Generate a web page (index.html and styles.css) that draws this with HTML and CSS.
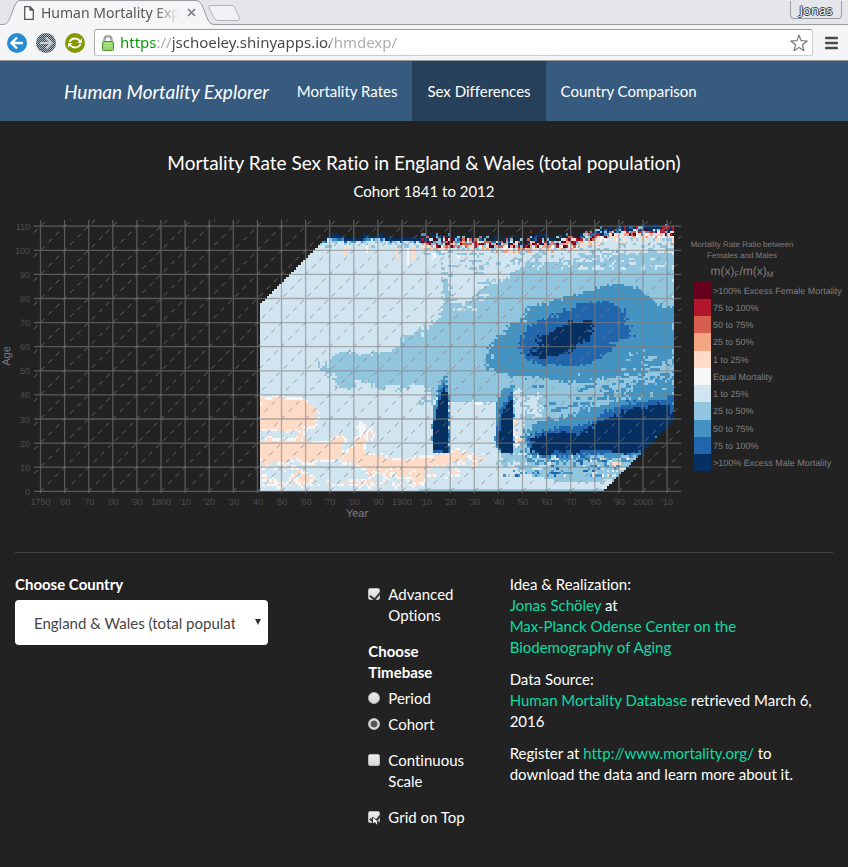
FILE: index.html
```html
<!DOCTYPE html>
<html lang="en">
<head>
<meta charset="utf-8">
<title>Human Mortality Explorer</title>
<link rel="stylesheet" href="styles.css">
</head>
<body>
<header class="browser">
  <div class="tabstrip">
    <svg class="tab-shape" width="250" height="25" viewBox="0 0 250 25" aria-hidden="true">
      <path d="M0 24.500H2C6 24.500 8 23 9.500 19L15 5Q16.500 .5 20 .5H196Q200 .5 202 5L208 20Q210 24.500 214 24.500H250V26H0Z" fill="#f4f5f7" stroke="#999b9f"/>
      <path d="M211 5.500H231Q234 5.500 235 8L239 17Q240.500 20.500 237 20.500H218Q215 20.500 213.500 17L209 8Q208 5.500 211 5.500Z" fill="#f0f1f3" stroke="#b3b4b8"/>
    </svg>
    <div class="tab">
      <svg width="10" height="14" viewBox="0 0 10 14" fill="#fff" stroke="#555" stroke-width="1.300" aria-hidden="true"><path d="M.7.7H6L9.300 4V13.300H.7ZM6 .7V4H9.300"/></svg>
      <span class="tab-title">Human Mortality Explorer</span>
      <button class="icon-button" aria-label="Close tab"><svg width="9" height="9" viewBox="0 0 9 9" stroke="#7c7e82" stroke-width="1.700"><path d="M1 1L8 8M8 1L1 8"/></svg></button>
    </div>
    <button class="profile">Jonas</button>
  </div>
  <div class="toolbar">
    <button class="icon-button" aria-label="Back"><svg width="20" height="20" viewBox="0 0 20 20"><circle cx="10" cy="10" r="10" fill="#268bd2"/><path d="M16 10H5M10 4.500L4.500 10L10 15.500" fill="none" stroke="#fff" stroke-width="2.400"/></svg></button>
    <button class="icon-button" aria-label="Forward"><svg width="20" height="20" viewBox="0 0 20 20"><defs><pattern id="dither" width="2" height="2" patternUnits="userSpaceOnUse"><path d="M0 0H1V1H0ZM1 1H2V2H1Z" fill="#234b66"/></pattern></defs><circle cx="10" cy="10" r="10" fill="#aebac3"/><circle cx="10" cy="10" r="10" fill="url(#dither)"/><path d="M4 10H15M10 4.500L15.500 10L10 15.500" fill="none" stroke="#e3e8ec" stroke-opacity=".75" stroke-width="2.200"/></svg></button>
    <button class="icon-button" aria-label="Reload"><svg width="20" height="20" viewBox="0 0 20 20"><circle cx="10" cy="10" r="10" fill="#859900"/><path d="M4.500 9Q6 5.500 10 5.500Q13 5.500 15 8M15.500 11Q14 14.500 10 14.500Q7 14.500 5 12" fill="none" stroke="#fff" stroke-width="1.900"/><path d="M17 5.500V10H12.500ZM3 14.500V10H7.500Z" fill="#fff"/></svg></button>
    <div class="omnibox">
      <svg width="12" height="16" viewBox="0 0 12 16" aria-hidden="true"><path d="M2.500 7V4.500Q2.500 1.200 6 1.200T9.500 4.500V7" fill="none" stroke="#777" stroke-width="2"/><path d="M2.500 7V4.500Q2.500 1.200 6 1.200T9.500 4.500V7" fill="none" stroke="#ddd" stroke-width=".7"/><rect x=".5" y="6.500" width="11" height="9" rx="1" fill="#93d36a" stroke="#4f9431"/><path d="M2 8.500H10M2 11H10" stroke="#b9e79b"/></svg>
      <input class="url" type="text" aria-label="Address" value="https://jschoeley.shinyapps.io/hmdexp/">
      <button class="icon-button" aria-label="Bookmark"><svg width="18" height="18" viewBox="0 0 18 18"><path d="M9 1L11 6.600L17.200 7L12.500 10.800L14 16.700L9 13.500L4 16.700L5.500 10.800L.8 7L7 6.600Z" fill="#fff" stroke="#777" stroke-width="1.200" stroke-linejoin="round"/></svg></button>
    </div>
    <button class="icon-button menu" aria-label="Menu"><svg width="13" height="14" viewBox="0 0 13 14"><path d="M1.300 2H11.700M1.300 7H11.700M1.300 12H11.700" stroke="#4a4a4a" stroke-width="2.700" stroke-linecap="round"/></svg></button>
  </div>
</header>

<nav class="navbar">
  <a class="brand" href="#">Human Mortality Explorer</a>
  <a class="nav-link" href="#rates">Mortality Rates</a>
  <a class="nav-link active" href="#sex">Sex Differences</a>
  <a class="nav-link" href="#countries">Country Comparison</a>
</nav>

<main>
  <h1>Mortality Rate Sex Ratio in England &amp; Wales (total population)</h1>
  <p class="subtitle">Cohort 1841 to 2012</p>
  <svg class="chart" id="chart" viewBox="0 205 848 320" role="img" aria-label="Mortality rate sex ratio by year and age"></svg>
  <hr>
  <div class="controls">
    <div class="country">
      <label class="heading" for="country">Choose Country</label>
      <div class="select-wrap">
        <select id="country"><option>England &amp; Wales (total population)</option></select>
        <svg class="caret" width="6" height="6" viewBox="0 0 6 6" aria-hidden="true"><path d="M0 0H6L3 6Z" fill="#333"/></svg>
      </div>
    </div>
    <div class="options">
      <label class="choice"><input type="checkbox" checked><span>Advanced Options</span></label>
      <fieldset>
        <legend class="heading">Choose Timebase</legend>
        <label class="choice"><input type="radio" name="timebase"><span>Period</span></label>
        <label class="choice"><input type="radio" name="timebase" checked><span>Cohort</span></label>
      </fieldset>
      <label class="choice"><input type="checkbox"><span>Continuous Scale</span></label>
      <label class="choice"><input type="checkbox" checked><span>Grid on Top</span>
        <svg class="pointer" width="7" height="8" viewBox="0 0 7 8" aria-hidden="true"><path d="M.5 0V7L3 5.500L4.500 8L6 7.500L5 5H7Z" fill="#fff" stroke="#111" stroke-width=".8"/></svg>
      </label>
    </div>
    <div class="credits">
      <p>Idea &amp; Realization:<br><a href="#author">Jonas Schöley</a> at<br><a href="#center">Max-Planck Odense Center on the Biodemography of Aging</a></p>
      <p>Data Source:<br><a href="#hmd">Human Mortality Database</a> retrieved March 6, 2016</p>
      <p>Register at <a href="#register">http://www.mortality.org/</a> to download the data and learn more about it.</p>
    </div>
  </div>
</main>
<script src="chart.js"></script>
</body>
</html>
```
FILE: styles.css
```css
* { box-sizing: border-box; }
body {
  margin: 0;
  background: #222;
  color: #fff;
  font: 15px/21px Lato, "Liberation Sans", sans-serif;
  font-variant-ligatures: none;
}
a { color: #08dda4; text-decoration: none; }
button, input, select { font: inherit; margin: 0; }
.icon-button { display: flex; padding: 0; border: 0; background: none; }

.browser { color: #555; font-family: "Noto Sans", sans-serif; background: #f4f5f7; border-bottom: 1px solid #999; }
.tabstrip { position: relative; display: flex; justify-content: space-between; height: 25px; background: #e5e6ea; border-bottom: 1px solid #999b9f; }
.tab-shape { position: absolute; left: 0; top: 0; }
.tab { position: relative; display: flex; align-items: center; gap: 7px; padding-left: 24px; padding-top: 1px; }
.tab-title {
  width: 138px;
  overflow: hidden;
  white-space: nowrap;
  font-size: 14px;
  -webkit-mask-image: linear-gradient(90deg, #000 82%, transparent);
  mask-image: linear-gradient(90deg, #000 82%, transparent);
}
.tab .icon-button { margin-left: 1px; }
.profile {
  align-self: flex-start;
  width: 52px;
  height: 18px;
  margin: 1px 6px 0;
  padding: 0;
  border: 1px solid #999b9f;
  border-top: 0;
  border-radius: 0 0 4px 4px;
  background: #e5e6ea;
  color: #eee;
  font-size: 13px;
  line-height: 18px;
  text-shadow: 1px 0 #444, -1px 0 #444, 0 1px #444, 0 -1px #444;
}
.toolbar { display: flex; align-items: center; gap: 9px; height: 35px; padding: 0 10px 0 7px; }
.omnibox { flex: 1; display: flex; align-items: center; gap: 6px; height: 27px; padding: 0 4px 0 7px; border: 1px solid #ccc; border-top-color: #999; border-left-color: #aaa; border-radius: 3px; background: #fff; }
.url {
  flex: 1;
  min-width: 0;
  padding: 0;
  border: 0;
  color: transparent;
  font-size: 15px;
  background: linear-gradient(90deg, #090 37px, #aaa 37px 52px, #444 52px 210px, #aaa 210px);
  -webkit-background-clip: text;
  background-clip: text;
}
.menu { margin-left: 3px; }

.navbar { display: flex; height: 60px; padding-left: 49px; background: #375a7f; }
.navbar a { padding: 20px 15px; color: #fff; }
.navbar .brand { padding-right: 13px; font-size: 19px; font-style: italic; }
.navbar .active { background: #28415b; }

main { padding: 31px 15px 0; }
h1 { margin: 0 0 7px; font-size: 19px; line-height: 22px; font-weight: 400; text-align: center; }
.subtitle { margin: 0 0 3px; text-align: center; }
.chart { display: block; width: calc(100% + 30px); margin: 0 -15px; font-family: "Liberation Sans", sans-serif; text-rendering: geometricPrecision; }
.tick { fill: #4d4d4d; font-size: 9px; }
.axis { fill: #7f7f7f; font-size: 11px; }
.key { fill: #7f7f7f; font-size: 9px; }
.key-title { fill: #7f7f7f; font-size: 8px; }
.formula { fill: #7f7f7f; font-size: 12px; }
.formula .sub { font-size: 8px; }
.grid { stroke: #7f7f7f; stroke-opacity: .6; stroke-width: 1.3; fill: none; }
.cohort { stroke: #7f7f7f; stroke-opacity: .75; stroke-width: 1; stroke-dasharray: 5 5.2; fill: none; }
hr { height: 1px; margin: 27px 0 21px; border: 0; background: #464545; }

.controls { display: grid; grid-template-columns: repeat(12, 1fr); column-gap: 30px; }
.country { grid-column: 1 / span 4; }
.options { grid-column: 6 / span 2; padding-top: 10px; }
.credits { grid-column: 8 / span 5; }
.heading { display: block; padding: 0; font-weight: 700; }
.select-wrap { position: relative; margin-top: 5px; }
select { display: block; width: 100%; height: 45px; padding: 1px 33px 0 19px; border: 0; border-radius: 4px; background: #fff; color: #464545; appearance: none; overflow: hidden; text-overflow: clip; }
.caret { position: absolute; right: 7px; top: 19px; }
fieldset { margin: 0 0 15px; padding: 0; border: 0; }
.choice { position: relative; display: flex; gap: 8px; margin-bottom: 15px; }
fieldset .choice { margin: 5px 0 0; }
.choice input {
  appearance: none;
  flex: none;
  width: 12px;
  height: 12px;
  margin-top: 4px;
  border: 1px solid #bbb;
  border-radius: 2px;
  background: linear-gradient(#eee, #d8d8d8);
}
.choice input[type="radio"] { border-radius: 50%; }
.choice input[type="radio"]:checked { background: radial-gradient(circle, #555 3px, #e2e2e2 4px); }
.choice input[type="checkbox"]:checked::after { content: ""; display: block; width: 5px; height: 9px; margin-left: 3px; border: solid #333; border-width: 0 2px 2px 0; transform: rotate(40deg); }
.pointer { position: absolute; left: 4px; top: 10px; }
.credits p { margin: 0 0 11px; }
```
FILE: chart.js
```js
// Lexis surface of the sex ratio: one cell per year and age.
const STEP = 2.41, X0 = 40.5, Y0 = 491.3;
const PALETTE = { '-5': '#67001f', '-4': '#b2182b', '-3': '#d6604d', '-2': '#f4a582', '-1': '#fddbc7', 0: '#f7f7f7', 1: '#d1e5f0', 2: '#92c5de', 3: '#4393c3', 4: '#2166ac', 5: '#053061' };
let seed = 7;
const rnd = () => (seed = (seed * 16807) % 2147483647) / 2147483647;
const pick = list => list[Math.floor(rnd() * list.length)];

// Regions: level, edge roughness, outline. Later ones lie on top.
const regions = [
  [2, 3, '332,358 345,350 358,355 372,354 380,350 390,352 396,348 405,337 410,333 418,335 426,325 438,319 443,310 443,278 447,278 449,300 458,304 475,298 485,285 500,281 515,275 523,267 530,260 560,263 600,260 620,254 676,254 676,492 604,492 622,470 604,482 560,482 530,474 513,464 500,466 500,402 470,402 452,402 436,400 430,395 425,385 410,385 402,392 392,384 380,390 370,383 358,380 350,390 340,388 331,375'],
  [2, 1, '318,362 321,362 321,371 318,371'], [2, 1, '324,362 329,362 329,374 324,374'],
  [1, 4, '527,394 539,394 539,416 528,416'],
  [1, 2, '514,388 522,390 524,430 520,440 514,450'],
  [3, 3, '487,365 490,345 500,335 510,325 522,322 527,310 535,305 548,304 560,298 575,295 590,290 605,286 615,284 628,286 640,290 650,295 653,302 662,306 676,308 676,362 655,366 640,374 600,380 570,383 540,376 510,376 492,372'],
  [4, 3, '519,345 522,335 530,325 545,318 555,315 565,311 580,304 600,301 618,305 623,312 628,325 630,332 633,338 615,342 612,352 600,358 592,363 575,366 535,364 523,354'],
  [5, 3, '527,355 540,345 538,337 550,334 560,327 570,322 590,321 594,328 590,338 580,345 572,350 560,356 545,357'],
  [3, 4, '527,460 524,440 527,428 540,422 560,418 585,410 605,405 622,396 640,385 676,370 676,425 640,457 600,458 540,462'],
  [4, 4, '530,450 530,436 545,430 570,428 590,422 602,414 615,408 625,403 645,401 665,397 676,395 676,425 640,454 600,453 540,457'],
  [5, 3, '533,453 533,437 548,434 560,431 575,434 588,430 598,422 612,418 625,411 632,408 645,408 655,404 667,403 671,412 676,418 672,426 645,452 625,453 600,450 575,453 555,451 545,456'],
  [3, 1, '440,382 446,376 447,392 449,402 449,424 448,452 433,452 433,420 435,402'],
  [4, 1, '441,386 446,383 448,402 449,452 434,452 434,418 438,402'],
  [5, 0, '443,388 446,388 448,402 449,452 434,451 434,425 437,410 440,398'],
  [3, 1, '498,403 501,391 504,388 513,387 513,453 502,453 495,442 495,430'],
  [4, 1, '500,408 507,401 511,392 513,393 513,453 500,452 496,442 496,432'],
  [5, 0, '502,413 509,402 511,400 513,402 513,453 501,452 498,445 498,432 502,430'],
  [-1, 1, '260,396 265,399 280,397 290,399 302,399 310,404 316,409 316,426 300,428 290,430 282,430 272,428 260,429'],
  [-1, 2, '260,440 270,439 280,441 292,440 299,438 299,428 304,428 304,441 315,443 330,443 338,436 342,434 342,457 335,459 322,459 315,462 302,463 298,456 285,463 260,464'],
  [-1, 2, '342,457 355,446 359,437 365,434 365,452 372,455 385,457 395,460 410,460 425,457 440,455 452,451 462,452 467,458 455,463 432,467 425,475 418,480 405,474 390,475 372,473 362,466 350,462 342,463'],
  [-1, 1, '369,429 373,429 373,439 369,439'],
  [-1, 3, '292,467 302,474 312,477 311,486 300,482'],
  [-1, 0, '345,242 347,242 347,256 345,256'], [-1, 0, '394,242 398,242 398,262 394,262'],
  [-1, 0, '412,240 417,240 417,260 412,260'], [0, 0, '407,243 409,243 409,265 407,265'],
  [0, 0, '366,246 369,246 369,252 366,252'], [0, 1, '358,422 365,420 366,434 358,438']
].map(([level, rough, text]) => ({ level, rough, points: text.split(' ').map(p => p.split(',').map(Number)) }));

// Scattered cells: x, y, width, height, share, levels.
const scatter = [
  [515, 244, 160, 19, .3, [2]], [425, 250, 95, 12, .14, [2, 2, 0]], [530, 258, 145, 12, .2, [1]],
  [452, 290, 40, 20, .12, [1]], [465, 262, 60, 22, .18, [2]], [440, 262, 10, 60, .3, [2]],
  [618, 350, 57, 40, .25, [2, 3]], [575, 374, 100, 26, .3, [3, 3, 2]], [510, 372, 70, 16, .1, [3]],
  [545, 402, 70, 18, .15, [3]], [600, 385, 75, 15, .25, [3]],
  [530, 455, 80, 12, .4, [3, 3, 1, 2, 4]], [590, 458, 40, 18, .3, [1, 0, -1, 3]], [515, 462, 90, 16, .25, [1, 3, 3, 4]],
  [513, 420, 5, 28, .7, [-1, -1, 0]], [460, 452, 28, 12, .25, [-1, -1, 0]], [418, 470, 36, 10, .2, [-1, 0]],
  [260, 482, 165, 5, .6, [-1, 0, -1, 1]], [260, 465, 60, 20, .12, [0, -1]], [365, 468, 55, 14, .25, [0, -1]],
  [420, 385, 16, 20, .3, [2]], [450, 400, 40, 8, .12, [2, 0]], [500, 450, 25, 28, .2, [2, 1, 3]],
  [322, 240, 100, 8, .35, [2, 2, 1]], [422, 248, 60, 10, .12, [-1, 0, 2]]
];

function inside(points, x, y) {
  let hit = false;
  for (let i = 0, j = points.length - 1; i < points.length; j = i++) {
    const [xi, yi] = points[i], [xj, yj] = points[j];
    if ((yi > y) !== (yj > y) && x < (xj - xi) * (y - yi) / (yj - yi) + xi) hit = !hit;
  }
  return hit;
}
const crest = [[422, 237], [460, 236], [500, 238], [525, 240], [535, 236], [548, 238], [575, 236], [595, 231], [610, 229], [640, 227], [655, 226], [676, 229]];
function crestAt(x) {
  for (let i = 1; i < crest.length; i++) if (x <= crest[i][0]) {
    const [a, b] = [crest[i - 1], crest[i]];
    return a[1] + (b[1] - a[1]) * Math.max(0, (x - a[0]) / (b[0] - a[0]));
  }
  return 229;
}

const cells = [];
const carried = {};
for (let c = 0; c < 172; c++) {
  cells[c] = [];
  const x = X0 + (91 + c + .5) * STEP;
  const bump = rnd() < .15 ? 2.4 : 0;
  for (let a = 0; a < 112; a++) {
    const y = Y0 - (a + .5) * STEP;
    let v = null;
    if (x + y > 564 && x + y < 1095 && y > 234) {
      v = 1;
      for (const r of regions) {
        const dx = (rnd() - .5) * r.rough * 3, dy = (rnd() - .5) * r.rough;
        if (inside(r.points, x + dx, y + dy)) v = r.level;
      }
      // A scattered value often carries on into the next year.
      let spot;
      for (const [sx, sy, w, h, share, levels] of scatter)
        if (x > sx && x < sx + w && y > sy && y < sy + h && rnd() < share * .75) spot = pick(levels);
      if (spot === undefined && carried[a] !== undefined && rnd() < .35) spot = carried[a];
      carried[a] = spot;
      if (spot !== undefined && v < 4) v = spot;
      if (a === 0 && x > 418) v = 2;
      if (x < 422) {
        const top = x > 410 ? 239 : x > 328 && x < 345 || x > 363 && x < 386 ? 236 : 238;
        if (y < top - bump) v = null;
        else if (y < top + 2.4) v = 5;
        else if (y < top + 4.8) v = pick([4, 3, 2, 1]);
        else if (y < top + 7.2) v = pick([2, 1, 1, v]);
      }
    }
    if (x >= 422 && x < 675) {
      const d = y - crestAt(x);
      const right = x > 595;
      if (d < -3.6) v = rnd() < .01 && d > -8 ? -4 : null;
      else if (d <= -1.2) v = rnd() < .25 ? pick([5, 5, 3]) : null;
      else if (d < 2.4) v = right ? pick([5, 5, 4, 5, -4, 2]) : pick([5, 5, 5, null, null, -3, 2]);
      else if (d < 5) v = pick([5, 5, 4, 2, -5, -4, -3, 1, -1, right ? 5 : null]);
      else if (d < 8) v = right ? pick([-5, -4, -3, -2, -1, -1, 0, 3, 1]) : pick([5, 3, -5, -4, -3, -2, -2, 1, 2]);
      else if (d < 11) v = right ? pick([-1, -1, -2, 1, 0]) : pick([-3, -2, -1, -1, -5, 0, 1, 2, -4]);
      else if (d < 14) v = pick([-1, 1, 1, 2, right ? -1 : -2]);
    }
    cells[c][a] = v;
  }
}
// Pale seam of equal mortality around the areas of female excess.
const seam = [];
for (let c = 0; c < 90; c++) for (let a = 1; a < 45; a++)
  if (cells[c][a] === 1 && [[1, 0], [-1, 0], [0, 1], [0, -1]].some(([i, j]) => cells[c + i] && cells[c + i][a + j] === -1) && rnd() < .55) seam.push([c, a]);
seam.forEach(([c, a]) => { cells[c][a] = 0; });

const shapes = {};
cells.forEach((col, c) => {
  const l = Math.round(X0 + (91 + c) * STEP), r = Math.round(X0 + (92 + c) * STEP);
  for (let a = 0; a < col.length;) {
    let e = a + 1;
    while (e < col.length && col[e] === col[a]) e++;
    if (col[a] !== null) {
      const b = Math.round(Y0 - a * STEP), t = Math.round(Y0 - e * STEP);
      shapes[col[a]] = (shapes[col[a]] || '') + `M${l} ${t}H${r}V${b}H${l}Z`;
    }
    a = e;
  }
});
let out = '<g shape-rendering="crispEdges">';
for (const k in shapes) out += `<path fill="${PALETTE[k]}" d="${shapes[k]}"/>`;
out += '</g>';

let grid = '', cohort = '';
for (let i = 0; i <= 26; i++) {
  const x = X0 + i * 10 * STEP;
  grid += `M${x} 220V493`;
  const label = [0, 5, 15, 25].includes(i) ? 1750 + i * 10 : "'" + String((1750 + i * 10) % 100).padStart(2, '0');
  out += `<text class="tick" text-anchor="middle" x="${x}" y="505">${label}</text>`;
}
for (let i = 0; i <= 11; i++) {
  const y = Y0 - i * 10 * STEP;
  grid += `M34 ${y}H681`;
  out += `<text class="tick" text-anchor="end" x="30" y="${y + 3.5}">${i * 10}</text>`;
}
for (let i = -11; i <= 26; i++) {
  const x = X0 + i * 10 * STEP;
  const start = Math.max(x, 34), end = Math.min(x + Y0 - 220, 681);
  cohort += `M${start} ${Y0 - (start - x)}L${end} ${Y0 - (end - x)}`;
}
out += `<path class="cohort" d="${cohort}"/><path class="grid" d="${grid}"/>`;
out += '<text class="axis" text-anchor="middle" x="357" y="517">Year</text><text class="axis" text-anchor="middle" transform="translate(10 356) rotate(-90)">Age</text>';
out += '<text class="key-title" text-anchor="middle" x="742" y="247">Mortality Rate Ratio between</text><text class="key-title" text-anchor="middle" x="742" y="258">Females and Males</text>';
out += '<text class="formula" text-anchor="middle" x="742" y="275">m(x)<tspan class="sub" dy="2">F</tspan><tspan dy="-2">/m(x)</tspan><tspan class="sub" dy="2">M</tspan></text>';
['>100% Excess Female Mortality', '75 to 100%', '50 to 75%', '25 to 50%', '1 to 25%', 'Equal Mortality', '1 to 25%', '25 to 50%', '50 to 75%', '75 to 100%', '>100% Excess Male Mortality'].forEach((t, i) => {
  const y = Math.round(281.5 + i * 17.27), n = Math.round(281.5 + (i + 1) * 17.27);
  out += `<rect x="694" y="${y}" width="17" height="${n - y}" fill="${PALETTE[i - 5]}"/><text class="key" x="713" y="${y + 12}">${t.replace('>', '&gt;')}</text>`;
});
document.getElementById('chart').innerHTML = out;
```
